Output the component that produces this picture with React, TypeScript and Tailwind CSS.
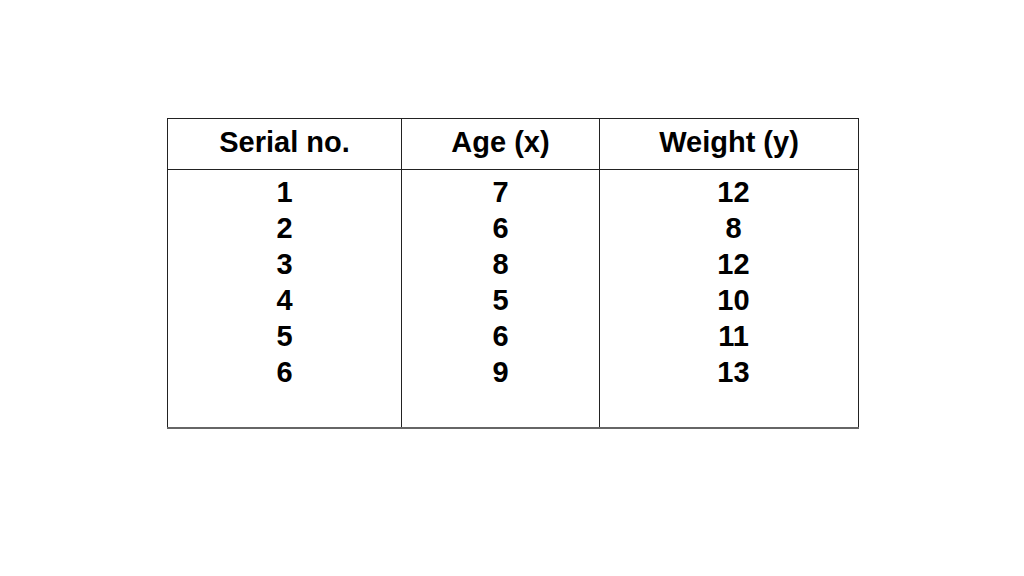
const rows = [
  ['1', '7', '12'],
  ['2', '6', '8'],
  ['3', '8', '12'],
  ['4', '5', '10'],
  ['5', '6', '11'],
  ['6', '9', '13'],
];

const App = () => {
  return (
    <div className="w-[1024px] h-[576px] bg-white pt-[118px] pl-[167px] font-['Liberation_Sans',Arial,sans-serif] font-bold text-black">
      <table className="border-collapse text-[29px] leading-none">
        <thead>
          <tr className="h-[51px]">
            <th className="w-[234px] border border-[#222] font-bold pb-[4px]">Serial no.</th>
            <th className="w-[198px] border border-[#222] font-bold pb-[4px]">Age (x)</th>
            <th className="w-[259px] border border-[#222] font-bold pb-[4px]">Weight (y)</th>
          </tr>
        </thead>
        <tbody>
          <tr className="h-[258px]">
            {[0, 1, 2].map((c) => (
              <td
                key={c}
                className={
                  c === 2
                    ? 'border border-[#222] border-b-2 border-b-[#666] align-top pt-[4px] pl-[9px] text-center'
                    : 'border border-[#222] border-b-2 border-b-[#666] align-top pt-[4px] text-center'
                }
              >
                {rows.map((r, i) => (
                  <div key={i} className="h-9 leading-9">
                    {r[c]}
                  </div>
                ))}
              </td>
            ))}
          </tr>
        </tbody>
      </table>
    </div>
  );
};

export default App;
